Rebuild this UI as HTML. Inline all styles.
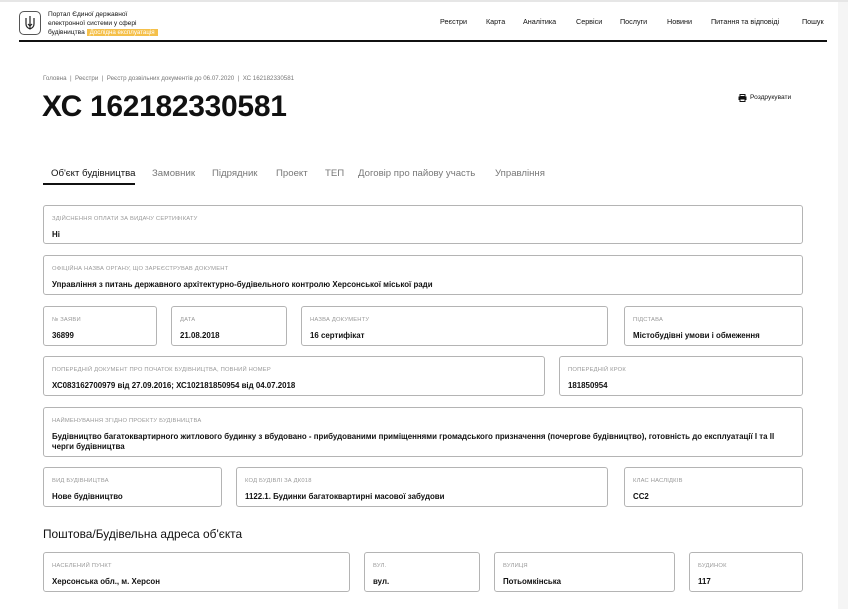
<!DOCTYPE html>
<html><head><meta charset="utf-8"><style>
*{margin:0;padding:0;box-sizing:border-box}
body{width:848px;height:609px;overflow:hidden;background:#fff;font-family:"Liberation Sans","DejaVu Sans",sans-serif;color:#111;position:relative}
.a{position:absolute;white-space:nowrap}
.b{position:absolute;border:1px solid #b4b4b4;border-radius:3px}
.b .l{position:absolute;left:8px;top:10px;font-size:5.8px;color:#999;text-transform:uppercase;letter-spacing:.2px}
.b .v{position:absolute;left:8px;top:24px;font-size:7.9px;font-weight:bold;color:#111;line-height:10px;white-space:normal;right:6px}
.nav{top:17px;font-size:7.2px;color:#111}
.tab{top:168px;font-size:9.6px;color:#777}
</style></head><body>
<div class="a" style="left:0;top:0;width:848px;height:2px;background:#e6e6e6"></div>
<div class="a" style="left:838px;top:2px;width:10px;height:607px;background:#f5f5f5"></div>
<div class="b" style="left:19px;top:11px;width:22px;height:24px;border-color:#555;border-radius:5px"></div>
<svg class="a" style="left:24px;top:15px" width="12" height="16" viewBox="0 0 12 16"><path d="M6 1v13M2 3v6c0 3 2 4 4 5 2-1 4-2 4-5V3M4 9l2 2 2-2M6 5v4" fill="none" stroke="#222" stroke-width="1.2"/></svg>
<div class="a" style="left:48px;top:10px;font-size:6.6px;line-height:9px;color:#111">Портал Єдиної державної<br>електронної системи у сфері<br>будівництва <span style="background:#f5c04a;color:#fff;padding:0 3px;font-size:6.2px">Дослідна експлуатація</span></div>
<div class="a nav" style="left:440px">Реєстри</div>
<div class="a nav" style="left:486px">Карта</div>
<div class="a nav" style="left:523px">Аналітика</div>
<div class="a nav" style="left:576px">Сервіси</div>
<div class="a nav" style="left:620px">Послуги</div>
<div class="a nav" style="left:667px">Новини</div>
<div class="a nav" style="left:711px">Питання та відповіді</div>
<div class="a nav" style="left:802px">Пошук</div>
<div class="a" style="left:19px;top:40px;width:808px;height:1.5px;background:#111"></div>
<div class="a" style="left:43px;top:75px;font-size:6.2px;color:#777">Головна &nbsp;|&nbsp; Реєстри &nbsp;|&nbsp; Реєстр дозвільних документів до 06.07.2020 &nbsp;|&nbsp; ХС 162182330581</div>
<div class="a" style="left:42px;top:90px;font-size:30px;font-weight:bold;letter-spacing:-.3px">ХС 162182330581</div>
<svg class="a" style="left:738px;top:94px" width="9" height="8" viewBox="0 0 9 8"><rect x="2" y="0.5" width="5" height="2" fill="none" stroke="#111"/><rect x="0.5" y="2.5" width="8" height="3.5" fill="#111"/><rect x="2" y="5" width="5" height="2.5" fill="#fff" stroke="#111"/></svg>
<div class="a" style="left:750px;top:94px;font-size:6.6px">Роздрукувати</div>
<div class="a tab" style="left:51px;color:#111">Об'єкт будівництва</div>
<div class="a tab" style="left:152px">Замовник</div>
<div class="a tab" style="left:212px">Підрядник</div>
<div class="a tab" style="left:276px">Проект</div>
<div class="a tab" style="left:325px">ТЕП</div>
<div class="a tab" style="left:358px">Договір про пайову участь</div>
<div class="a tab" style="left:495px">Управління</div>
<div class="a" style="left:43px;top:183px;width:92px;height:2px;background:#111"></div>

<div class="b" style="left:43px;top:205px;width:760px;height:39px"><div class="l">Здійснення оплати за видачу сертифікату</div><div class="v">Ні</div></div>
<div class="b" style="left:43px;top:255px;width:760px;height:40px"><div class="l">Офіційна назва органу, що зареєстрував документ</div><div class="v">Управління з питань державного архітектурно-будівельного контролю Херсонської міської ради</div></div>
<div class="b" style="left:43px;top:306px;width:114px;height:40px"><div class="l">№ заяви</div><div class="v">36899</div></div>
<div class="b" style="left:171px;top:306px;width:116px;height:40px"><div class="l">Дата</div><div class="v">21.08.2018</div></div>
<div class="b" style="left:301px;top:306px;width:307px;height:40px"><div class="l">Назва документу</div><div class="v">16 сертифікат</div></div>
<div class="b" style="left:624px;top:306px;width:179px;height:40px"><div class="l">Підстава</div><div class="v">Містобудівні умови і обмеження</div></div>
<div class="b" style="left:43px;top:356px;width:502px;height:40px"><div class="l">Попередній документ про початок будівництва, повний номер</div><div class="v">ХС083162700979 від 27.09.2016; ХС102181850954 від 04.07.2018</div></div>
<div class="b" style="left:559px;top:356px;width:244px;height:40px"><div class="l">Попередній крок</div><div class="v">181850954</div></div>
<div class="b" style="left:43px;top:407px;width:760px;height:50px"><div class="l">Найменування згідно проекту будівництва</div><div class="v">Будівництво багатоквартирного житлового будинку з вбудовано - прибудованими приміщеннями громадського призначення (почергове будівництво), готовність до експлуатації І та ІІ черги будівництва</div></div>
<div class="b" style="left:43px;top:467px;width:179px;height:40px"><div class="l">Вид будівництва</div><div class="v">Нове будівництво</div></div>
<div class="b" style="left:236px;top:467px;width:372px;height:40px"><div class="l">Код будівлі за ДК018</div><div class="v">1122.1. Будинки багатоквартирні масової забудови</div></div>
<div class="b" style="left:624px;top:467px;width:179px;height:40px"><div class="l">Клас наслідків</div><div class="v">СС2</div></div>
<div class="a" style="left:43px;top:527px;font-size:11.9px">Поштова/Будівельна адреса об'єкта</div>
<div class="b" style="left:43px;top:552px;width:307px;height:40px"><div class="l">Населений пункт</div><div class="v">Херсонська обл., м. Херсон</div></div>
<div class="b" style="left:364px;top:552px;width:116px;height:40px"><div class="l">Вул.</div><div class="v">вул.</div></div>
<div class="b" style="left:494px;top:552px;width:181px;height:40px"><div class="l">Вулиця</div><div class="v">Потьомкінська</div></div>
<div class="b" style="left:689px;top:552px;width:114px;height:40px"><div class="l">Будинок</div><div class="v">117</div></div>
</body></html>
